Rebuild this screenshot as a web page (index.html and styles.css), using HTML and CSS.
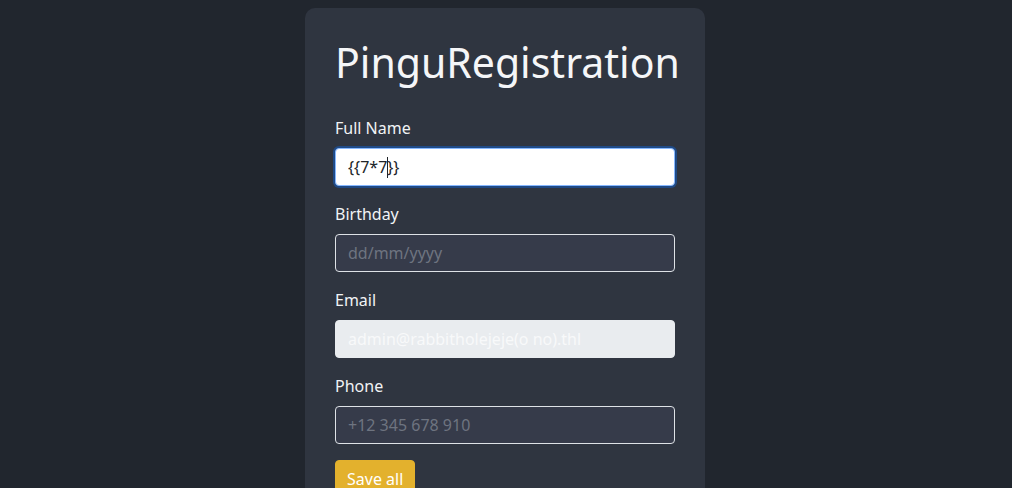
FILE: index.html
```html
<!DOCTYPE html><html><head>
  <meta charset="UTF-8">
  <title>PinguRegistration</title>
  <link rel="stylesheet" href="styles.css">
</head><body>

<div class="card">
  <h1>PinguRegistration</h1>
  <form action="nope://" method="get">
    <div class="group">
      <label for="fullname">Full Name</label>
      <div class="wrap">
        <input type="text" id="fullname" class="field" value="{{7*7}}">
        <span class="caret"></span>
      </div>
    </div>
    <div class="group">
      <label for="birthday">Birthday</label>
      <input type="text" id="birthday" class="field" placeholder="dd/mm/yyyy">
    </div>
    <div class="group">
      <label for="email">Email</label>
      <input type="text" id="email" class="field" value="admin@rabbitholejeje(o no).thl" disabled>
    </div>
    <div class="group">
      <label for="phone">Phone</label>
      <input type="text" id="phone" class="field" placeholder="+12 345 678 910">
    </div>
    <button type="submit" class="save">Save all</button>
  </form>
</div>

<script>
var nm = document.getElementById('fullname');
nm.focus();
nm.setSelectionRange(5, 5);
</script>

</body></html>
```

FILE: styles.css
```css
html, body { margin: 0; padding: 0; }
body { background: #21262e; color: #f3f4f6;
  font-family: "Noto Sans", "Open Sans", sans-serif; font-size: 16px;
  line-height: 1.5; }
.card { width: 340px; margin: 8px 0 0 calc(50% - 201px); padding: 30px;
  background: #2f3540; border-radius: 10px; min-height: 480px; }
h1 { margin: 0 0 30px; font-size: 41px; font-weight: 400; line-height: 48px;
  color: #f5f6f8; }
.group { margin-bottom: 16px; }
label { display: block; margin-bottom: 8px; color: #f1f3f5; }
.wrap { position: relative; }
.caret { position: absolute; left: 52px; top: 9px; width: 1px; height: 21px;
  background: #212529; }
.field { display: block; box-sizing: border-box; width: 100%; height: 38px;
  padding: 6px 12px; font: inherit; font-size: 16px; line-height: 1.5;
  color: #dee2e6; background: #363b4a; border: 1px solid #dee2e6;
  border-radius: 4px; outline: none; }
.field::placeholder { color: #6e7480; }
.field:focus { background: #fff; color: #212529; border-color: #86b7fe;
  box-shadow: 0 0 0 2px #1f4a86; caret-color: transparent; }
.field:disabled { background: #e9ecef; color: #f8f9fa; border-color: #e9ecef; }
.save { margin-top: 0; padding: 6px 11px; font: inherit; font-size: 16px;
  line-height: 1.5; color: #fff; background: #e3b12d; border: 1px solid #e3b12d;
  border-radius: 4px; }
```
